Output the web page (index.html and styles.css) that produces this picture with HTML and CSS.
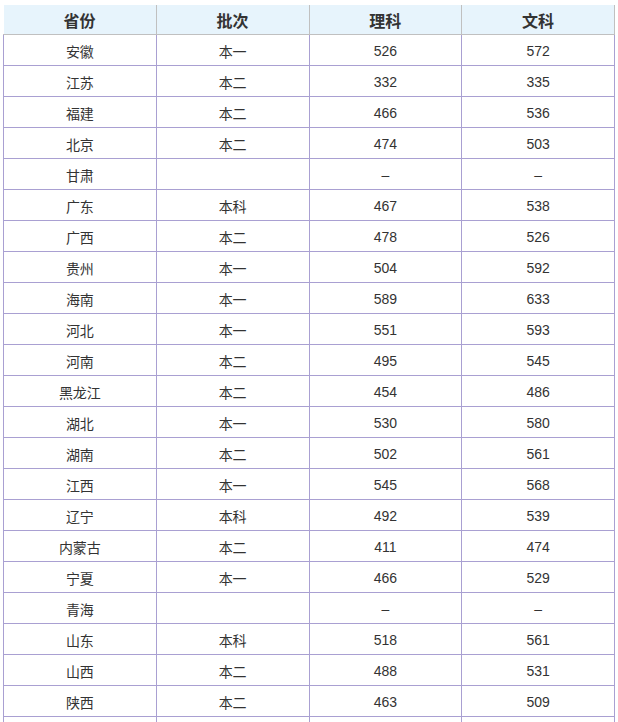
FILE: index.html
```html
<!DOCTYPE html>
<html lang="zh-CN">
<head>
<meta charset="utf-8">
<title>分数线</title>
<link rel="stylesheet" href="styles.css">
</head>
<body>
<table class="score-table">
  <thead>
    <tr><th>省份</th><th>批次</th><th>理科</th><th>文科</th></tr>
  </thead>
  <tbody>
    <tr><td>安徽</td><td>本一</td><td>526</td><td>572</td></tr>
    <tr><td>江苏</td><td>本二</td><td>332</td><td>335</td></tr>
    <tr><td>福建</td><td>本二</td><td>466</td><td>536</td></tr>
    <tr><td>北京</td><td>本二</td><td>474</td><td>503</td></tr>
    <tr><td>甘肃</td><td></td><td>–</td><td>–</td></tr>
    <tr><td>广东</td><td>本科</td><td>467</td><td>538</td></tr>
    <tr><td>广西</td><td>本二</td><td>478</td><td>526</td></tr>
    <tr><td>贵州</td><td>本一</td><td>504</td><td>592</td></tr>
    <tr><td>海南</td><td>本一</td><td>589</td><td>633</td></tr>
    <tr><td>河北</td><td>本一</td><td>551</td><td>593</td></tr>
    <tr><td>河南</td><td>本二</td><td>495</td><td>545</td></tr>
    <tr><td>黑龙江</td><td>本二</td><td>454</td><td>486</td></tr>
    <tr><td>湖北</td><td>本一</td><td>530</td><td>580</td></tr>
    <tr><td>湖南</td><td>本二</td><td>502</td><td>561</td></tr>
    <tr><td>江西</td><td>本一</td><td>545</td><td>568</td></tr>
    <tr><td>辽宁</td><td>本科</td><td>492</td><td>539</td></tr>
    <tr><td>内蒙古</td><td>本二</td><td>411</td><td>474</td></tr>
    <tr><td>宁夏</td><td>本一</td><td>466</td><td>529</td></tr>
    <tr><td>青海</td><td></td><td>–</td><td>–</td></tr>
    <tr><td>山东</td><td>本科</td><td>518</td><td>561</td></tr>
    <tr><td>山西</td><td>本二</td><td>488</td><td>531</td></tr>
    <tr><td>陕西</td><td>本二</td><td>463</td><td>509</td></tr>
    <tr><td></td><td></td><td></td><td></td></tr>
  </tbody>
</table>
</body>
</html>
```
FILE: styles.css
```css
html, body {
  margin: 0;
  padding: 0;
  background: #ffffff;
}
body {
  padding: 5px 0 0 3px;
  font-family: "Liberation Sans", "Noto Sans CJK SC", sans-serif;
  color: #333333;
}
.score-table {
  border-collapse: collapse;
  width: 612px;
  table-layout: fixed;
}
.score-table th {
  background: #e7f4fc;
  font-size: 16px;
  font-weight: bold;
  color: #333333;
  height: 29px;
  padding: 0;
  text-align: center;
  border-right: 1px solid #c0c0c0;
  border-bottom: 1px solid #c0c0c0;
}
.score-table td {
  font-size: 14px;
  height: 29px;
  padding: 1px 0 0;
  text-align: center;
  border: 1px solid #a9a0d2;
}
```
